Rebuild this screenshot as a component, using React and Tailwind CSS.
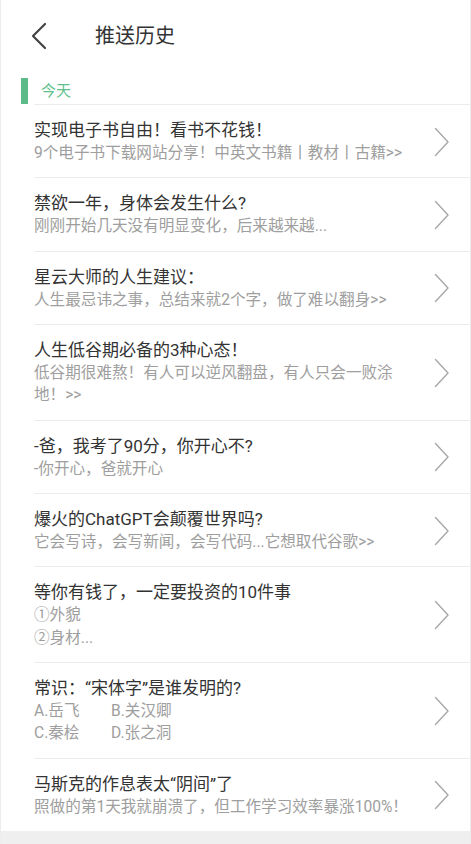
const items = [
  { title: '实现电子书自由！看书不花钱！', lines: ['9个电子书下载网站分享！中英文书籍丨教材丨古籍>>'] },
  { title: '禁欲一年，身体会发生什么?', lines: ['刚刚开始几天没有明显变化，后来越来越...'] },
  { title: '星云大师的人生建议：', lines: ['人生最忌讳之事，总结来就2个字，做了难以翻身>>'] },
  { title: '人生低谷期必备的3种心态！', lines: ['低谷期很难熬！有人可以逆风翻盘，有人只会一败涂', '地！>>'] },
  { title: '-爸，我考了90分，你开心不?', lines: ['-你开心，爸就开心'] },
  { title: '爆火的ChatGPT会颠覆世界吗?', lines: ['它会写诗，会写新闻，会写代码...它想取代谷歌>>'] },
  { title: '等你有钱了，一定要投资的10件事', lines: ['①外貌', '②身材...'] },
  { title: '常识：“宋体字”是谁发明的?', grid: [['A.岳飞', 'B.关汉卿'], ['C.秦桧', 'D.张之洞']] },
  { title: '马斯克的作息表太“阴间”了', lines: ['照做的第1天我就崩溃了，但工作学习效率暴涨100%！'] }
];

function Chevron() {
  return (
    <svg width="16" height="30" viewBox="0 0 16 30" fill="none" className="shrink-0">
      <path d="M1.5 1.5 L14 15 L1.5 28.5" stroke="#a8a8a8" strokeWidth="1.4" strokeLinecap="round" strokeLinejoin="round" />
    </svg>
  );
}

function Row({ item }) {
  return (
    <div className="ml-[33px] flex items-center border-t border-[#ececec] pt-[14px] pb-[12.75px]">
      <div className="flex-1 whitespace-nowrap">
        <p className="text-[17px] leading-[23px] text-[#333333]">{item.title}</p>
        {item.lines
          ? item.lines.map((l) => (
              <p key={l} className="text-[15.6px] leading-[22.5px] text-[#9e9e9e]">{l}</p>
            ))
          : item.grid.map((r) => (
              <div key={r[0]} className="grid grid-cols-[77px_1fr] text-[15.6px] leading-[22.5px] text-[#9e9e9e]">
                <span>{r[0]}</span>
                <span>{r[1]}</span>
              </div>
            ))}
      </div>
      <div className="mr-[20px] pl-2">
        <Chevron />
      </div>
    </div>
  );
}

export default function App() {
  return (
    <div
      className="flex min-h-screen w-full flex-col overflow-hidden border-x border-[#ededed] bg-white"
      style={{ fontFamily: 'Roboto, "Noto Sans CJK SC", sans-serif' }}
    >
      <header className="flex h-[72px] items-center">
        <svg width="20" height="28" viewBox="0 0 20 28" fill="none" className="ml-[28px]">
          <path d="M16 2 L4 14 L16 26" stroke="#444444" strokeWidth="2.2" strokeLinecap="round" strokeLinejoin="round" />
        </svg>
        <h1 className="ml-[46px] text-[20px] text-[#333333]">推送历史</h1>
      </header>
      <div className="mt-[6px] flex items-center">
        <div className="ml-[20px] h-[26px] w-[7px] bg-[#5cbb88]" />
        <span className="ml-[13px] text-[15px] leading-[26px] text-[#62bf8c]">今天</span>
      </div>
      <div>
        {items.map((item) => (
          <Row key={item.title} item={item} />
        ))}
      </div>
      <div className="flex-1 bg-[#efefef]" />
    </div>
  );
}
